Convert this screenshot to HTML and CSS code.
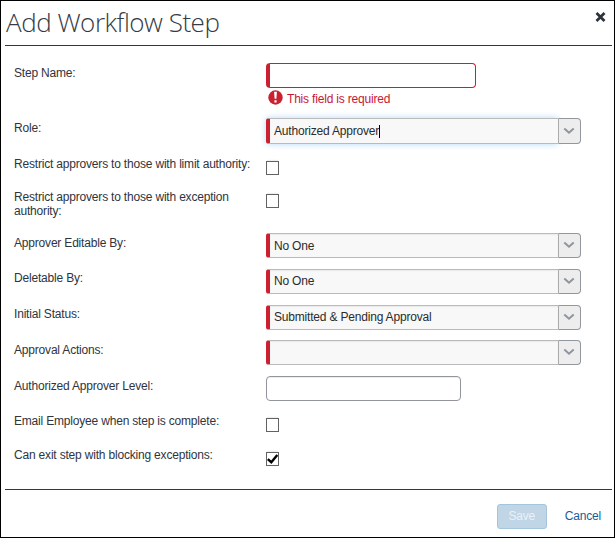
FILE: index.html
```
<!DOCTYPE html>
<html lang="en">
<head>
<meta charset="utf-8">
<title>Add Workflow Step</title>
<link rel="stylesheet" href="styles.css">
</head>
<body>
<svg class="defs" width="0" height="0"><symbol id="chev" viewBox="0 0 12 8"><path d="M1.3 1.5 6 5.7l4.7-4.2" fill="none" stroke="#8e959e" stroke-width="2"/></symbol></svg>
<main class="dialog">
  <header class="head">
    <h1><span class="title">Add Workflow Step</span></h1>
    <svg class="close" width="11" height="10" viewBox="0 0 11 10"><path d="M1.5 1 9.5 9M9.5 1 1.5 9" stroke="#2d333b" stroke-width="2.7"/></svg>
  </header>
  <form class="form">
    <div class="row r-name"><label><span>Step Name:</span></label>
      <div><div class="input error"></div>
        <div class="message"><svg width="15" height="15" viewBox="0 0 15 15"><circle cx="7.5" cy="7.5" r="7.2" fill="#cb2030"/><path d="M6.1 1.8h2.8l-.5 7H6.6zM6.4 10.2h2.2v2.2H6.4z" fill="#fff"/></svg><span>This field is required</span></div></div></div>
    <div class="row r-role"><label><span>Role:</span></label>
      <div class="select focus"><div class="value"><span>Authorized Approver</span><i class="caret"></i></div><div class="arrow"><svg width="12" height="8"><use href="#chev"/></svg></div></div></div>
    <div class="row check r-limit"><label><span>Restrict approvers to those with limit authority:</span></label><div class="box"></div></div>
    <div class="row check r-exception"><label><span>Restrict approvers to those with exception authority:</span></label><div class="box"></div></div>
    <div class="row r-select"><label><span>Approver Editable By:</span></label>
      <div class="select"><div class="value"><span>No One</span></div><div class="arrow"><svg width="12" height="8"><use href="#chev"/></svg></div></div></div>
    <div class="row r-select r-delete"><label><span>Deletable By:</span></label>
      <div class="select"><div class="value"><span>No One</span></div><div class="arrow"><svg width="12" height="8"><use href="#chev"/></svg></div></div></div>
    <div class="row r-status"><label><span>Initial Status:</span></label>
      <div class="select"><div class="value"><span>Submitted &amp; Pending Approval</span></div><div class="arrow"><svg width="12" height="8"><use href="#chev"/></svg></div></div></div>
    <div class="row r-select"><label><span>Approval Actions:</span></label>
      <div class="select"><div class="value"></div><div class="arrow"><svg width="12" height="8"><use href="#chev"/></svg></div></div></div>
    <div class="row r-level"><label><span>Authorized Approver Level:</span></label><div class="input plain"></div></div>
    <div class="row check r-email"><label><span>Email Employee when step is complete:</span></label><div class="box"></div></div>
    <div class="row check r-exit"><label><span>Can exit step with blocking exceptions:</span></label>
      <div class="box"><svg width="11" height="12" viewBox="0 0 11 12"><path d="M.8 6.2 4.3 9.2 10.3 2" fill="none" stroke="#000" stroke-width="2.4"/></svg></div></div>
  </form>
  <footer class="foot"><div class="save">Save</div><div class="cancel">Cancel</div></footer>
</main>
</body>
</html>
```
FILE: styles.css
```
* { box-sizing: border-box; }
body { margin: 0; background: #fff; font: 12px/14px "Liberation Sans", Arial, sans-serif; letter-spacing: -0.19px; color: #2f343d; }
.defs { display: none; }
.dialog { width: 615px; height: 538px; border: 1px solid #000; padding: 0 2px 0 4px; overflow: hidden; }
.head { height: 45px; border-bottom: 1px solid #363744; display: flex; justify-content: space-between; align-items: flex-start; }
h1 { margin: 2px 0 0 1px; font: 300 26px/38px "Open Sans", sans-serif; letter-spacing: -0.48px; color: #343b47; white-space: nowrap; }
.close { margin: 11px 6px 0 0; }
.form { padding: 17px 0 0 9px; }
.row { display: grid; grid-template-columns: 252px 1fr; align-items: start; }
.row label { padding: 3px 8px 0 0; }
.row.check label { padding-top: 0; }
.r-name { height: 55px; }
.r-role { height: 39px; }
.r-limit { height: 33px; }
.r-exception { height: 43px; }
.r-select { height: 36px; }
.r-delete label, .r-status label { padding-top: 2px; }
.r-delete .value, .r-status .value { padding-bottom: 2px; }
.r-status { height: 35px; }
.r-level { height: 38px; }
.r-email { height: 34px; }
.r-exit { height: 41px; }
.input { height: 25px; border: 1px solid #92959c; border-radius: 4px; box-shadow: inset 0 1px 1px #eee; }
.plain { width: 195px; }
.error { width: 210px; border-color: #c82032; border-left: 4px solid #cb2030; box-shadow: none; }
.message { display: flex; align-items: flex-start; gap: 4px; padding: 2px 0 0 2px; color: #c91633; }
.message span { padding-top: 2px; }
.select { display: flex; width: 315px; height: 25px; }
.value { display: flex; align-items: center; width: 292px; border: solid #bababa; border-width: 1px 0; border-left: 4px solid #cb2030; border-radius: 3px 0 0 3px; background: #f8f8f8; padding-left: 4px; color: #2b2b2b; box-shadow: inset 0 1px 1px #eaeaea; }
.focus { height: 26px; }
.focus .value { box-shadow: 0 0 7px #b4d9f8; }
.caret { width: 1px; height: 13px; background: #000; }
.arrow { display: flex; align-items: center; justify-content: center; width: 23px; border: 1px solid #92969d; border-left-color: #aaa; border-radius: 0 4px 4px 0; background: #ededed; z-index: 1; }
.arrow svg { margin: 0 1px 1px 0; }
.box { width: 13px; height: 14px; margin-top: 4px; border: 1px solid #626262; box-shadow: 0 -2px 1px -1px #eee; }
.box svg { display: block; }
.foot { height: 48px; border-top: 1px solid #363744; display: flex; justify-content: flex-end; align-items: flex-start; padding: 14px 11px 0 0; gap: 18px; line-height: 23px; }
.save { width: 50px; height: 25px; border: 1px solid #a5c5dc; border-radius: 3px; background: #c0d5e5; color: #e8f2fa; text-align: center; }
.cancel { color: #205c99; padding-top: 1px; }
```
